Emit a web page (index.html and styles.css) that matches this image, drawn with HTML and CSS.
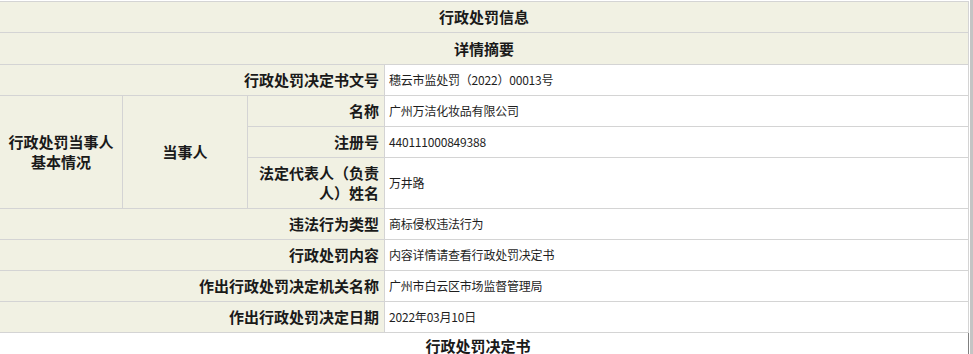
FILE: index.html
```html
<!DOCTYPE html>
<html lang="zh-CN">
<head>
<meta charset="utf-8">
<title>行政处罚信息</title>
<link rel="stylesheet" href="styles.css">
</head>
<body>
<div class="page">
  <div class="main">
    <table class="info">
      <colgroup>
        <col class="c1"><col class="c2"><col class="c3"><col class="c4">
      </colgroup>
      <tr class="r-title"><th colspan="4" class="head">行政处罚信息</th></tr>
      <tr class="r-sub"><th colspan="4" class="head">详情摘要</th></tr>
      <tr class="r"><th colspan="3" class="label">行政处罚决定书文号</th><td class="value">穗云市监处罚（2022）00013号</td></tr>
      <tr class="r">
        <th rowspan="3" class="group">行政处罚当事人<br>基本情况</th>
        <th rowspan="3" class="group">当事人</th>
        <th class="label">名称</th><td class="value">广州万洁化妆品有限公司</td>
      </tr>
      <tr class="r"><th class="label">注册号</th><td class="value">440111000849388</td></tr>
      <tr class="r-tall"><th class="label">法定代表人（负责人）姓名</th><td class="value">万井路</td></tr>
      <tr class="r"><th colspan="3" class="label">违法行为类型</th><td class="value">商标侵权违法行为</td></tr>
      <tr class="r"><th colspan="3" class="label">行政处罚内容</th><td class="value">内容详情请查看行政处罚决定书</td></tr>
      <tr class="r"><th colspan="3" class="label">作出行政处罚决定机关名称</th><td class="value">广州市白云区市场监督管理局</td></tr>
      <tr class="r"><th colspan="3" class="label">作出行政处罚决定日期</th><td class="value">2022年03月10日</td></tr>
    </table>
    <div class="doc-title">行政处罚决定书</div>
  </div>
  <div class="edge"></div>
</div>
</body>
</html>
```
FILE: styles.css
```css
* { box-sizing: border-box; }
html, body {
  margin: 0;
  padding: 0;
  overflow: hidden;
  background: #ffffff;
  font-family: "Noto Sans CJK SC", "Liberation Sans", sans-serif;
  color: #1c1c1c;
}
.page {
  display: flex;
  width: 973px;
  height: 354px;
}
.main {
  width: 970px;
  flex: none;
  background: #ffffff;
}
.edge {
  width: 3px;
  flex: none;
  background: #c4c4c4;
}
.info {
  table-layout: fixed;
  border-collapse: separate;
  border-spacing: 0;
  width: 970px;
  margin: 1px 0 0 -1px;
  border-top: 1px solid #d4d4d4;
  border-left: 1px solid #d4d4d4;
}
.c1 { width: 123px; }
.c2 { width: 125px; }
.c3 { width: 137px; }
.c4 { width: 584px; }
.info th, .info td {
  border-right: 1px solid #d4d4d4;
  border-bottom: 1px solid #d4d4d4;
  padding: 0;
  vertical-align: middle;
}
.r-title { height: 31px; }
.r-sub { height: 32px; }
.r { height: 31px; }
.r-tall { height: 51px; }
.head {
  background: #f1f1e3;
  text-align: center;
  font-size: 15px;
  font-weight: 700;
  line-height: 20px;
  color: #1a1a1a;
}
.label {
  background: #f1f1e3;
  text-align: right;
  font-size: 15px;
  font-weight: 700;
  line-height: 20px;
  padding: 0 5px 0 6px !important;
  color: #1a1a1a;
}
.group {
  background: #f1f1e3;
  text-align: center;
  font-size: 15px;
  font-weight: 700;
  line-height: 20px;
  padding: 0 4px !important;
  color: #1a1a1a;
}
.value {
  background: #ffffff;
  text-align: left;
  font-size: 12px;
  font-weight: 400;
  line-height: 16px;
  padding: 0 4px !important;
  color: #1e1e1e;
  letter-spacing: -0.2px;
}
.doc-title {
  width: 969px;
  border-right: 1px solid #808080;
  padding: 4px 12px 0 0;
  height: 21px;
  text-align: center;
  font-size: 15px;
  font-weight: 700;
  line-height: 17px;
  color: #1a1a1a;
}
```
